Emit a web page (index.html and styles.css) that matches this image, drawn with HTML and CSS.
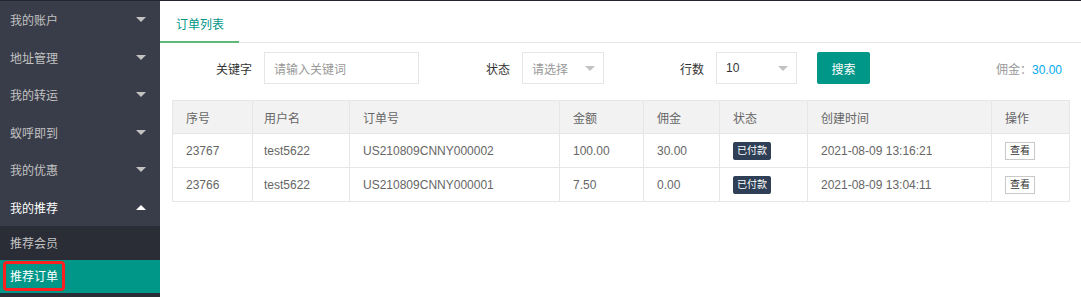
FILE: index.html
```html
<!DOCTYPE html>
<html lang="zh-CN">
<head>
<meta charset="utf-8">
<title>推荐订单</title>
<link rel="stylesheet" href="styles.css">
</head>
<body>
<div class="topbar"></div>
<div class="layout">
  <aside class="sidebar">
    <ul class="nav">
      <li class="nav-item"><span>我的账户</span><i class="caret down"></i></li>
      <li class="nav-item"><span>地址管理</span><i class="caret down"></i></li>
      <li class="nav-item"><span>我的转运</span><i class="caret down"></i></li>
      <li class="nav-item"><span>蚁呼即到</span><i class="caret down"></i></li>
      <li class="nav-item"><span>我的优惠</span><i class="caret down"></i></li>
      <li class="nav-item open"><span>我的推荐</span><i class="caret up"></i></li>
    </ul>
    <ul class="subnav">
      <li class="sub-item"><span>推荐会员</span></li>
      <li class="sub-item active"><span class="marked">推荐订单</span></li>
    </ul>
  </aside>
  <main class="main">
    <div class="tabs">
      <div class="tab active"><span class="tab-text">订单列表</span></div>
    </div>
    <form class="filters">
      <label class="label l1">关键字</label>
      <div class="input kw">请输入关键词</div>
      <label class="label l2">状态</label>
      <div class="input select s1"><span class="ph">请选择</span><i class="sel-caret"></i></div>
      <label class="label l3">行数</label>
      <div class="input select s2"><span class="val">10</span><i class="sel-caret"></i></div>
      <button type="button" class="btn">搜索</button>
      <div class="commission">佣金：<span class="amount">30.00</span></div>
    </form>
    <table class="grid">
      <colgroup>
        <col class="c1"><col class="c2"><col class="c3"><col class="c4">
        <col class="c5"><col class="c6"><col class="c7"><col class="c8">
      </colgroup>
      <thead>
        <tr><th>序号</th><th class="pl">用户名</th><th>订单号</th><th>金额</th><th>佣金</th><th>状态</th><th>创建时间</th><th>操作</th></tr>
      </thead>
      <tbody>
        <tr><td>23767</td><td class="pl">test5622</td><td>US210809CNNY000002</td><td>100.00</td><td>30.00</td><td><span class="badge">已付款</span></td><td>2021-08-09 13:16:21</td><td><span class="view">查看</span></td></tr>
        <tr><td>23766</td><td class="pl">test5622</td><td>US210809CNNY000001</td><td>7.50</td><td>0.00</td><td><span class="badge">已付款</span></td><td>2021-08-09 13:04:11</td><td><span class="view">查看</span></td></tr>
      </tbody>
    </table>
  </main>
</div>
</body>
</html>
```
FILE: styles.css
```css
* { box-sizing: border-box; }
html, body { margin: 0; padding: 0; }
body {
  font-family: "Liberation Sans", "Noto Sans CJK SC", sans-serif;
  font-size: 12px;
  color: #333;
  background: #fff;
  height: 297px;
  overflow: hidden;
}
.topbar { height: 1px; background: #23262e; }
.layout { display: flex; height: 296px; }

.sidebar { width: 160px; flex: 0 0 160px; background: #393d49; display: flex; flex-direction: column; }
.nav, .subnav { list-style: none; margin: 0; padding: 0; }
.nav-item {
  height: 37.5px; display: flex; align-items: center; justify-content: space-between;
  padding: 0 10px; color: #c2c2c2; font-size: 12px;
}
.nav-item.open { color: #fff; }
.caret { width: 0; height: 0; border-left: 5px solid transparent; border-right: 5px solid transparent; margin-right: 4px; }
.caret.down { border-top: 5px solid #c2c2c2; }
.caret.up { border-bottom: 5px solid #fff; }
.subnav { background: #2a2d35; flex: 1; }
.sub-item { height: 33.5px; display: flex; align-items: center; padding: 0 10px; color: #c2c2c2; }
.sub-item.active { background: #009688; color: #fff; }
.marked { border: 3px solid #ff1f1f; border-radius: 4px; padding: 3px 4px 4px; margin-left: -7px; }

.main { flex: 1; display: flex; flex-direction: column; }
.tabs { height: 42px; flex: 0 0 42px; border-bottom: 1px solid #e6e6e6; display: flex; align-items: flex-start; }
.tab { width: 79px; height: 42px; display: flex; align-items: flex-end; padding: 0 0 7px 16px; color: #009688; font-size: 12px; border-bottom: 2px solid #5fb878; }
.tab-text { display: block; line-height: 17px; }

.filters { display: flex; align-items: center; margin-top: 9px; height: 32px; padding-right: 19px; }
.label { text-align: right; padding-right: 12px; color: #333; }
.l1 { width: 104px; }
.l2 { width: 103px; }
.l3 { width: 112px; }
.input { height: 32px; border: 1px solid #e6e6e6; display: flex; align-items: center; padding-left: 9px; color: #999; }
.kw { width: 155px; }
.select { justify-content: space-between; padding-right: 8px; }
.s1 { width: 82px; }
.s2 { width: 81px; }
.val { color: #333; }
.sel-caret { width: 0; height: 0; border-left: 5px solid transparent; border-right: 5px solid transparent; border-top: 5px solid #c2c2c2; }
.btn {
  margin-left: 20px; width: 53px; height: 32px; border: 0; border-radius: 2px;
  background: #009688; color: #fff; font: inherit; font-size: 12px; padding: 0;
}
.commission { margin-left: auto; color: #999; }
.amount { color: #01aaed; }

.grid {
  margin: 16px 0 0 12px; width: 897px; border-collapse: collapse; table-layout: fixed;
  color: #666; font-size: 12px;
}
.c1 { width: 80px; } .c2 { width: 97px; } .c3 { width: 210px; } .c4 { width: 84px; }
.c5 { width: 76px; } .c6 { width: 88px; } .c7 { width: 184px; } .c8 { width: 78px; }
.grid th, .grid td { border: 1px solid #e6e6e6; height: 34px; padding: 0 0 0 13px; text-align: left; font-weight: normal; }
.grid th { background: #f2f2f2; height: 33px; }
.grid .pl { padding-left: 11px; }
.badge { display: inline-block; background: #2f4056; color: #fff; font-size: 10px; line-height: 18px; height: 18px; padding: 0 4px; border-radius: 2px; }
.view { display: inline-block; border: 1px solid #c9c9c9; background: #fff; color: #333; font-size: 10px; line-height: 16px; height: 18px; padding: 0 4px; }
```
